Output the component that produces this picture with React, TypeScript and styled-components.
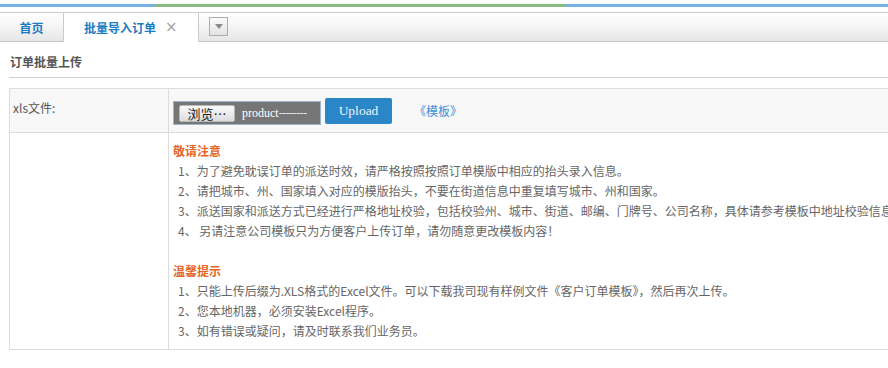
import React from "react";
import styled, { createGlobalStyle } from "styled-components";

const Global = createGlobalStyle`
  html, body { margin: 0; padding: 0; background: #fff; overflow: hidden; }
  body { font-family: "Noto Sans CJK SC", "Microsoft YaHei", sans-serif; font-size: 12px; color: #555; }
  * { box-sizing: border-box; }
`;

const Page = styled.div`
  width: 888px;
  height: 368px;
  overflow: hidden;
  padding-top: 4px;
`;

const Strip = styled.div`
  height: 3px;
  background: linear-gradient(
    to right,
    #74b3e4 0,
    #74b3e4 155px,
    #88bb80 155px,
    #88bb80 565px,
    #74b3e4 565px,
    #74b3e4 100%
  );
`;

const TabBar = styled.div`
  margin-top: 5px;
  height: 30px;
  display: flex;
  align-items: stretch;
  border-top: 1px solid #cbcbcb;
  border-bottom: 1px solid #c6c6c6;
  background: linear-gradient(to bottom, #fefefe 0%, #f8f8f8 35%, #e6e6e6 100%);
`;

const Tab = styled.div<{ $active?: boolean }>`
  display: flex;
  align-items: center;
  justify-content: ${(p) => (p.$active ? "flex-start" : "center")};
  width: ${(p) => (p.$active ? "136px" : "63px")};
  padding-left: ${(p) => (p.$active ? "20px" : "0")};
  font-weight: bold;
  font-size: 12px;
  color: #1b7cc1;
  background: ${(p) => (p.$active ? "#fff" : "transparent")};
  border-left: ${(p) => (p.$active ? "1px solid #cbcbcb" : "none")};
  border-right: ${(p) => (p.$active ? "1px solid #cbcbcb" : "none")};
  margin-bottom: ${(p) => (p.$active ? "-1px" : "0")};
`;

const Close = styled.span`
  margin-left: 9px;
  color: #a3a3a3;
  font-weight: normal;
  font-size: 15px;
  font-family: "DejaVu Sans", sans-serif;
  line-height: 1;
`;

const DropBtn = styled.div`
  margin: 4px 0 0 10px;
  width: 19px;
  height: 19px;
  border: 1px solid #adadad;
  background: linear-gradient(to bottom, #fbfbfb, #e3e3e3);
  display: flex;
  align-items: center;
  justify-content: center;
`;

const Tri = styled.div`
  width: 0;
  height: 0;
  border-left: 4px solid transparent;
  border-right: 4px solid transparent;
  border-top: 5px solid #8a8a8a;
`;

const Content = styled.div`
  margin-left: 9px;
`;

const Title = styled.div`
  padding: 12px 0 7px 1px;
  line-height: 16px;
  font-weight: bold;
  font-size: 12px;
  color: #555;
  border-bottom: 1px solid #cfcfcf;
`;

const Grid = styled.div`
  margin-top: 10px;
  display: grid;
  grid-template-columns: 159px max-content;
  min-width: 1000px;
  border-top: 1px solid #dcdcdc;
  border-left: 1px solid #dcdcdc;
`;

const Cell = styled.div<{ $h: number; $bg?: string }>`
  height: ${(p) => p.$h}px;
  border-right: 1px solid #dcdcdc;
  border-bottom: 1px solid #dcdcdc;
  background: ${(p) => p.$bg || "#fff"};
`;

const Label = styled(Cell)`
  padding: 9px 0 0 3px;
  line-height: 20px;
  color: #555;
`;

const UploadCell = styled(Cell)`
  display: flex;
  align-items: flex-end;
  padding: 0 0 7px 4px;
`;

const FileBox = styled.div`
  width: 148px;
  height: 24px;
  border: 1px solid #9fb4c8;
  background: #767676;
  display: flex;
  align-items: center;
  padding-left: 5px;
  white-space: nowrap;
`;

const Browse = styled.div`
  width: 56px;
  height: 17px;
  flex: none;
  border: 1px solid #b8b8b8;
  border-radius: 2px;
  background: linear-gradient(to bottom, #fafafa, #dcdcdc);
  color: #222;
  font-size: 13px;
  line-height: 15px;
  text-align: center;
`;

const FileName = styled.span`
  margin-left: 7px;
  color: #fff;
  font-family: "Liberation Serif", serif;
  font-size: 12px;
  line-height: 15px;
`;

const Dash = styled.span`
  color: #e6e6e6;
  font-family: "Liberation Serif", serif;
  font-size: 12px;
  letter-spacing: -0.5px;
`;

const UploadBtn = styled.div`
  margin-left: 4px;
  width: 67px;
  height: 26px;
  margin-bottom: 1px;
  background: #2a86c6;
  border-radius: 2px;
  color: #eef4fa;
  font-family: "Liberation Serif", serif;
  font-size: 13.5px;
  display: flex;
  align-items: center;
  justify-content: center;
`;

const Link = styled.a`
  align-self: center;
  margin: 0 0 -6px 22px;
  color: #3a90da;
  text-decoration: none;
  font-size: 12px;
`;

const Notes = styled(Cell)`
  padding: 8px 0 0 4px;
  line-height: 20px;
  white-space: nowrap;
`;

const Heading = styled.div`
  color: #e4672a;
  font-weight: bold;
  font-size: 12px;
`;

const Item = styled.div`
  padding-left: 5px;
  color: #666;
  font-size: 12px;
`;

const Blank = styled.div`
  height: 20px;
`;

const notice = [
  "1、为了避免耽误订单的派送时效，请严格按照按照订单模版中相应的抬头录入信息。",
  "2、请把城市、州、国家填入对应的模版抬头，不要在街道信息中重复填写城市、州和国家。",
  "3、派送国家和派送方式已经进行严格地址校验，包括校验州、城市、街道、邮编、门牌号、公司名称，具体请参考模板中地址校验信息。",
  "4、 另请注意公司模板只为方便客户上传订单，请勿随意更改模板内容！",
];

const tips = [
  "1、只能上传后缀为.XLS格式的Excel文件。可以下载我司现有样例文件《客户订单模板》，然后再次上传。",
  "2、您本地机器，必须安装Excel程序。",
  "3、如有错误或疑问，请及时联系我们业务员。",
];

export default function App() {
  return (
    <Page>
      <Global />
      <Strip />
      <TabBar>
        <Tab>首页</Tab>
        <Tab $active>
          批量导入订单<Close>×</Close>
        </Tab>
        <DropBtn>
          <Tri />
        </DropBtn>
      </TabBar>
      <Content>
        <Title>订单批量上传</Title>
        <Grid>
          <Label $h={44} $bg="#f8f8f8">xls文件:</Label>
          <UploadCell $h={44} $bg="#f8f8f8">
            <FileBox>
              <Browse>浏览…</Browse>
              <FileName>product</FileName>
              <Dash>--------</Dash>
            </FileBox>
            <UploadBtn>Upload</UploadBtn>
            <Link href="#">《模板》</Link>
          </UploadCell>
          <Cell $h={217} />
          <Notes $h={217}>
            <Heading>敬请注意</Heading>
            {notice.map((t) => (
              <Item key={t}>{t}</Item>
            ))}
            <Blank />
            <Heading>温馨提示</Heading>
            {tips.map((t) => (
              <Item key={t}>{t}</Item>
            ))}
          </Notes>
        </Grid>
      </Content>
    </Page>
  );
}
